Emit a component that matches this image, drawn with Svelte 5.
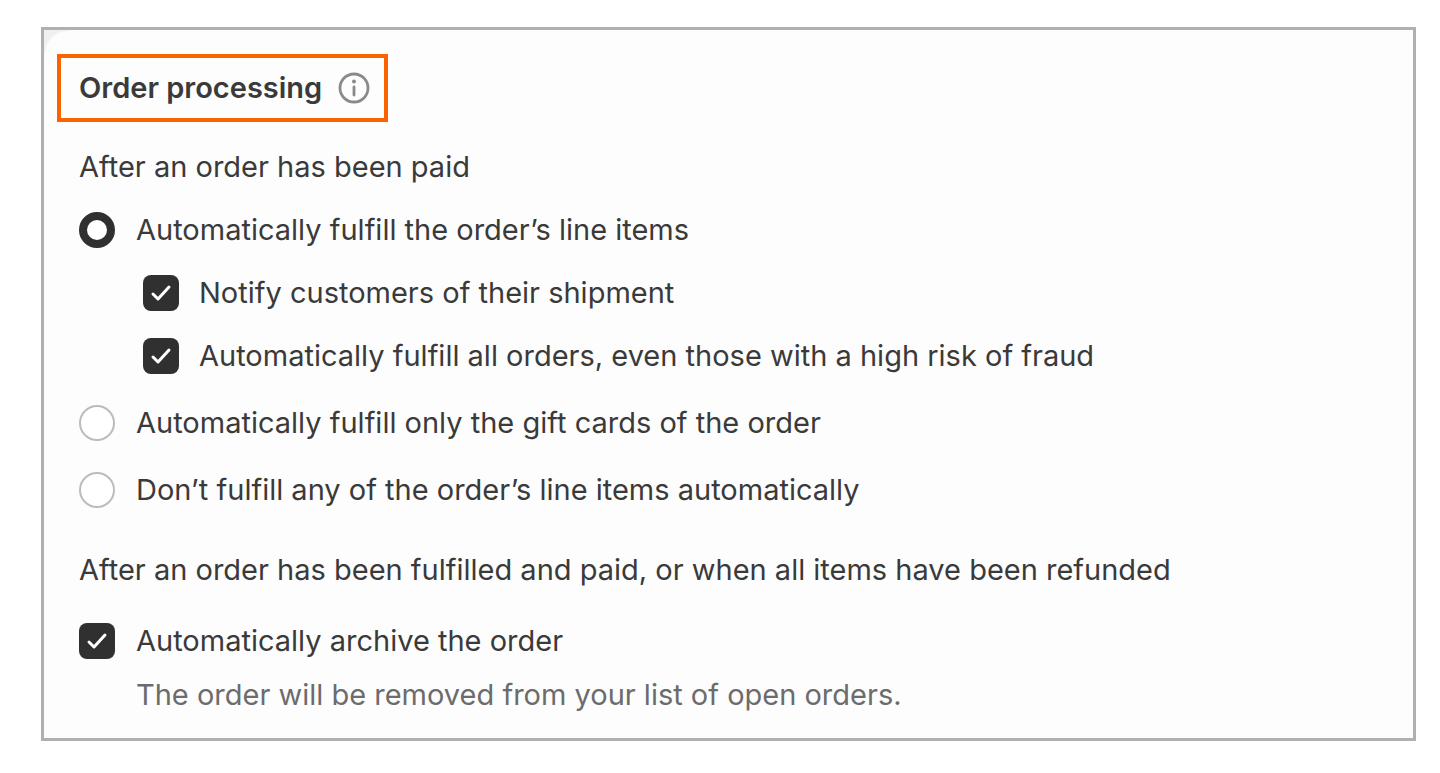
<script>
  let processing = $state('all');
  let notify = $state(true);
  let risky = $state(true);
  let archive = $state(true);
</script>

<main>
  <section class="card">
    <h2>
      <span>Order processing</span>
      <button type="button" aria-label="More information">
        <svg viewBox="0 0 32 32" width="32" height="32" fill="none" stroke="#8a8a8a" stroke-width="2.8" stroke-linecap="round">
          <circle cx="16" cy="16" r="14" />
          <path d="M16 15v8" />
          <circle cx="16" cy="9.500" r="1.200" fill="#8a8a8a" stroke-width="1.600" />
        </svg>
      </button>
    </h2>

    <fieldset>
      <legend>After an order has been paid</legend>
      <label><input type="radio" name="processing" value="all" bind:group={processing} />Automatically fulfill the order’s line items</label>
      <div class="nested">
        <label><input type="checkbox" bind:checked={notify} />Notify customers of their shipment</label>
        <label><input type="checkbox" bind:checked={risky} />Automatically fulfill all orders, even those with a high risk of fraud</label>
      </div>
      <label class="option"><input type="radio" name="processing" value="gift" bind:group={processing} />Automatically fulfill only the gift cards of the order</label>
      <label class="option"><input type="radio" name="processing" value="none" bind:group={processing} />Don’t fulfill any of the order’s line items automatically</label>
    </fieldset>

    <fieldset>
      <legend>After an order has been fulfilled and paid, or when all items have been refunded</legend>
      <label class="archive"><input type="checkbox" bind:checked={archive} aria-describedby="archive-help" />Automatically archive the order</label>
      <p id="archive-help">The order will be removed from your list of open orders.</p>
    </fieldset>
  </section>
</main>

<style>
  :global(body) {
    margin: 0;
    background: #fff;
  }
  main {
    padding: 27px 24px 32px 41px;
    font: 425 29px/36px Inter, sans-serif;
    color: #3a3a3a;
  }
  .card {
    border: 3px solid #b0b0b0;
    background: radial-gradient(circle at 24px 24px, #fdfdfd 22px, #f0f0f0 24px) 0 0 / 24px 24px no-repeat, #fdfdfd;
    padding: 24px 35px 25px;
  }
  h2 {
    display: flex;
    align-items: center;
    gap: 16px;
    width: fit-content;
    margin: 0 0 27px -22px;
    padding: 12px 14px 12px 18px;
    border: 4px solid #fa6400;
    font: 600 29px/36px Inter, sans-serif;
  }
  button {
    display: flex;
    padding: 0;
    border: 0;
    background: none;
  }
  fieldset {
    margin: 0 0 44px;
    padding: 0;
    border: 0;
    min-width: 0;
  }
  fieldset:last-child {
    margin: 0;
  }
  legend {
    padding: 0;
    margin-bottom: 27px;
  }
  label {
    display: flex;
    align-items: center;
    gap: 21px;
  }
  .nested {
    display: grid;
    gap: 27px;
    padding: 27px 0 0 64px;
  }
  .nested label {
    gap: 20px;
  }
  .option {
    margin-top: 31px;
  }
  .archive {
    padding-top: 8px;
  }
  input {
    appearance: none;
    flex: none;
    box-sizing: border-box;
    width: 36px;
    height: 36px;
    margin: 0;
    background: #fff;
    border: 2px solid #bcbcbc;
  }
  input[type='radio'] {
    border-radius: 50%;
  }
  input[type='radio']:checked {
    border: 8px solid #303030;
  }
  input[type='checkbox'] {
    border-radius: 8px;
  }
  input[type='checkbox']:checked {
    border: 0;
    background: #303030 url("data:image/svg+xml,%3Csvg xmlns='http://www.w3.org/2000/svg' viewBox='0 0 36 36'%3E%3Cpath d='M10 19l5 5L26 12' fill='none' stroke='white' stroke-width='3' stroke-linecap='round' stroke-linejoin='round'/%3E%3C/svg%3E") center / 36px no-repeat;
  }
  p {
    margin: 18px 0 0 57px;
    color: #6c6c6c;
  }
</style>
